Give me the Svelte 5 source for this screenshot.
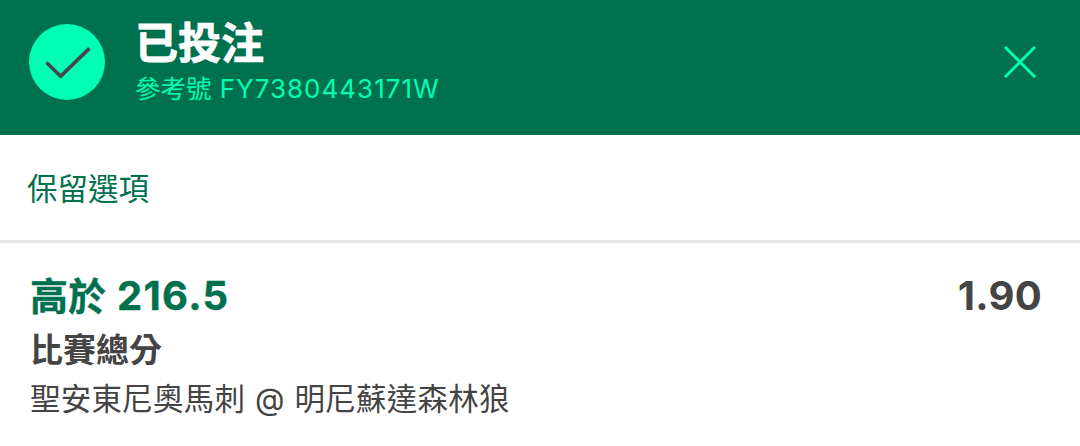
<script lang="ts">
  const reference = 'FY7380443171W';

  const bet = {
    side: '高於',
    line: '216.5',
    odds: '1.90',
    market: '比賽總分',
    event: '聖安東尼奧馬刺 @ 明尼蘇達森林狼'
  };

  let open = $state(true);

  function close() {
    open = false;
  }
</script>

{#if open}
  <section class="receipt">
    <header class="receipt-header">
      <svg class="check" width="76" height="76" viewBox="0 0 76 76" fill="none" aria-hidden="true">
        <circle cx="38" cy="38" r="38" fill="#00ffb4" />
        <path d="M17.5 38.5L31.7 52.3L60.4 24.4" stroke="#444649" stroke-width="3.6" />
      </svg>
      <div class="heading">
        <h1 class="title">已投注</h1>
        <p class="reference">參考號 <span class="reference-id">{reference}</span></p>
      </div>
      <button class="close" aria-label="關閉" onclick={close}>
        <svg width="32" height="32" viewBox="0 0 32 32" fill="none" stroke="#00ffb4" stroke-width="3">
          <path d="M1 1L31 31M31 1L1 31" />
        </svg>
      </button>
    </header>

    <div class="keep-row">
      <button class="keep">保留選項</button>
    </div>

    <div class="bet">
      <div class="bet-top">
        <span class="selection">{bet.side} <span class="line">{bet.line}</span></span>
        <span class="odds">{bet.odds}</span>
      </div>
      <div class="market">{bet.market}</div>
      <div class="event">{bet.event}</div>
    </div>
  </section>
{/if}

<style>
  :global(body) {
    background: #fff;
  }

  .receipt {
    font-family: Inter, 'Noto Sans CJK TC', sans-serif;
    color: #444;
    white-space: nowrap;
  }

  .receipt-header {
    display: flex;
    align-items: flex-start;
    box-sizing: border-box;
    height: 135px;
    padding: 24px 44px 0 29px;
    background: #00714e;
  }

  .check {
    flex-shrink: 0;
  }

  .heading {
    flex: 1;
    margin: -6px 0 0 30px;
  }

  .title {
    margin: 0;
    font-size: 43px;
    font-weight: 700;
    line-height: 50px;
    color: #fff;
    -webkit-text-stroke: 0.8px #fff;
  }

  .reference {
    margin: 5px 0 0;
    font-size: 25.5px;
    line-height: 32px;
    color: #00ffb4;
  }

  .reference-id {
    margin-left: 1px;
    font-size: 26px;
    letter-spacing: 1px;
  }

  button {
    padding: 0;
    border: 0;
    background: none;
    font-family: inherit;
    cursor: pointer;
  }

  .close {
    display: flex;
    margin-top: 22px;
  }

  .keep-row {
    display: flex;
    align-items: center;
    box-sizing: border-box;
    height: 108px;
    padding: 0 0 2px 27px;
    border-bottom: 3px solid #e4e4e4;
  }

  .keep {
    font-size: 30.5px;
    color: #00714e;
  }

  .bet {
    padding: 28px 39px 0 30px;
  }

  .bet-top {
    display: flex;
    justify-content: space-between;
    font-size: 38px;
    font-weight: 700;
    line-height: 50px;
  }

  .selection {
    color: #00714e;
    -webkit-text-stroke: 0.4px #00714e;
  }

  .line {
    margin-left: 2px;
    font-size: 40px;
    letter-spacing: 1.3px;
  }

  .odds {
    margin-right: -1px;
    font-size: 40px;
    letter-spacing: 0.3px;
  }

  .market {
    margin-top: 7px;
    font-size: 33px;
    font-weight: 700;
    line-height: 44px;
  }

  .event {
    margin-top: 5px;
    font-size: 30.5px;
    line-height: 44px;
    letter-spacing: 0.25px;
    word-spacing: 1px;
  }
</style>
